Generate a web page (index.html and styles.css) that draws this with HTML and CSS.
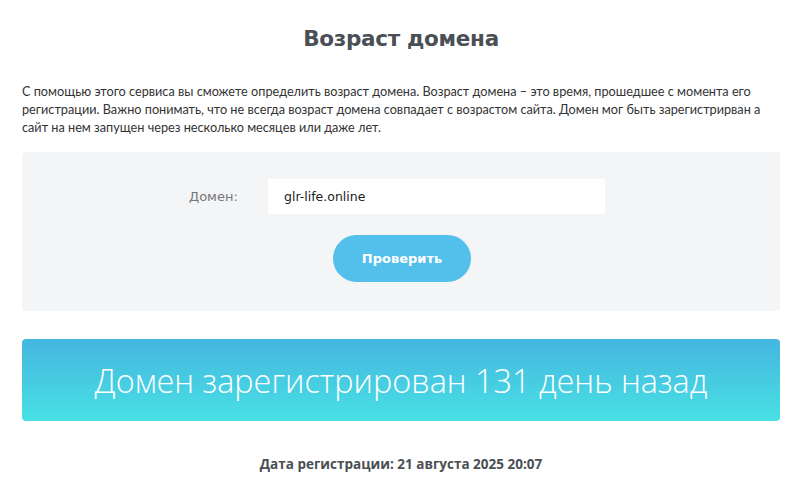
FILE: index.html
```html
<!DOCTYPE html>
<html lang="ru">
<head>
<meta charset="utf-8">
<link rel="stylesheet" href="styles.css">
</head>
<body>
<div class="page">
  <h1 class="title">Возраст домена</h1>
  <p class="intro">С помощью этого сервиса вы сможете определить возраст домена. Возраст домена – это время, прошедшее с момента его регистрации. Важно понимать, что не всегда возраст домена совпадает с возрастом сайта. Домен мог быть зарегистрирван а сайт на нем запущен через несколько месяцев или даже лет.</p>
  <form class="panel">
    <div class="row">
      <label class="label">Домен:</label>
      <div class="input">glr-life.online</div>
    </div>
    <button class="btn" type="button">Проверить</button>
  </form>
  <div class="banner">Домен зарегистрирован 131 день назад</div>
  <div class="date">Дата регистрации: 21 августа 2025 20:07</div>
</div>
</body>
</html>
```
FILE: styles.css
```css
html, body { margin: 0; padding: 0; background: #fff; }
body { font-family: "Open Sans", "DejaVu Sans", sans-serif; color: #333; }
.page { padding: 0 20px 0 22px; }
.title {
  margin: 0; padding-top: 26px; height: 32px;
  text-align: center; font-size: 21.5px; font-weight: 700; color: #4a4f55;
  font-family: "DejaVu Sans", sans-serif; letter-spacing: -0.3px;
}
.intro {
  margin: 24px 0 0; font-family: "Lato", sans-serif; font-size: 12.7px; line-height: 18px; color: #333;
}
.panel {
  margin-top: 16px; background: #f4f5f7; border-radius: 4px; height: 159px;
  display: flex; flex-direction: column; align-items: center; box-sizing: border-box; padding-top: 27px;
}
.row { display: flex; align-items: center; margin-right: 8px; }
.label { font-size: 13px; color: #777; width: 79px; font-family: "DejaVu Sans", sans-serif; }
.input {
  width: 321px; height: 35px; background: #fff; padding-left: 16px; font-size: 12.5px;
  line-height: 35px; color: #222; font-family: "DejaVu Sans", sans-serif;
}
.btn {
  margin-top: 21px; width: 138px; height: 47px; border: 0; border-radius: 24px;
  background: #52c0ea; color: #fff; font-weight: 700; font-size: 13px; font-family: "DejaVu Sans", sans-serif;
  margin-left: 2px;
}
.banner {
  margin-top: 28px; height: 82px; border-radius: 4px;
  background: linear-gradient(#45b6e0, #48e0e4);
  color: #fff; font-size: 32.4px; font-weight: 300; text-align: center; line-height: 82px;
  font-family: "Open Sans", sans-serif;
}
.date {
  margin-top: 34px; text-align: center; font-weight: 700; font-size: 13.5px; color: #4a4f55;
  font-family: "Open Sans", sans-serif;
}
```
